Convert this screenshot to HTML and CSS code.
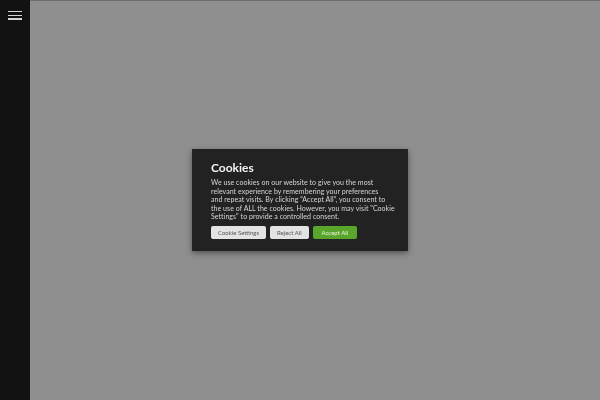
FILE: index.html
```html
<!DOCTYPE html>
<html>
<head>
<meta charset="utf-8">
<link rel="stylesheet" href="styles.css">
</head>
<body>
<div class="page">
  <aside class="sidebar">
    <button class="menu" aria-label="Menu">
      <span></span><span></span><span></span>
    </button>
  </aside>
  <main class="main"></main>
</div>
<div class="overlay">
  <div class="modal">
    <h2 class="title">Cookies</h2>
    <p class="text">We use cookies on our website to give you the most<br>relevant experience by remembering your preferences<br>and repeat visits. By clicking “Accept All”, you consent to<br>the use of ALL the cookies. However, you may visit "Cookie<br>Settings" to provide a controlled consent.</p>
    <div class="actions">
      <button class="btn btn-light">Cookie Settings</button>
      <button class="btn btn-light">Reject All</button>
      <button class="btn btn-green">Accept All</button>
    </div>
  </div>
</div>
</body>
</html>
```
FILE: styles.css
```css
html, body {
  margin: 0;
  padding: 0;
  height: 100%;
}
body {
  font-family: "Lato", "Open Sans", sans-serif;
}
.page {
  display: flex;
  height: 100vh;
}
.sidebar {
  width: 30px;
  background: #121212;
  flex-shrink: 0;
}
.menu {
  display: flex;
  flex-direction: column;
  gap: 2.4px;
  margin: 11px 0 0 8px;
  padding: 0;
  border: 0;
  background: none;
  width: 14px;
}
.menu span {
  display: block;
  height: 1.3px;
  background: #d4d4d4;
}
.main {
  flex: 1;
  background: #8f8f8f;
  border-top: 1px solid #6f6f6f;
}
.overlay {
  position: fixed;
  inset: 0;
  display: flex;
  align-items: center;
  justify-content: center;
}
.modal {
  width: 216px;
  box-sizing: border-box;
  padding: 12px 8px 12px 19px;
  background: #222222;
  box-shadow: 0 2px 6px rgba(0,0,0,0.45);
}
.title {
  margin: 0;
  font-size: 12px;
  line-height: 14px;
  font-weight: 700;
  color: #f2f2f2;
}
.text {
  margin: 3.5px 0 0 0;
  font-size: 7px;
  letter-spacing: 0.05px;
  line-height: 8.4px;
  color: #d6d6d6;
}
.actions {
  display: flex;
  gap: 4px;
  margin-top: 5.5px;
}
.btn {
  font-family: inherit;
  font-size: 6px;
  height: 13px;
  padding: 0 7px;
  border: 0;
  border-radius: 2px;
}
.btn-light {
  background: #e3e3e3;
  color: #555555;
}
.btn-green {
  background: #5aa52b;
  color: #eaf5e0;
  padding: 0 9px;
}
```
